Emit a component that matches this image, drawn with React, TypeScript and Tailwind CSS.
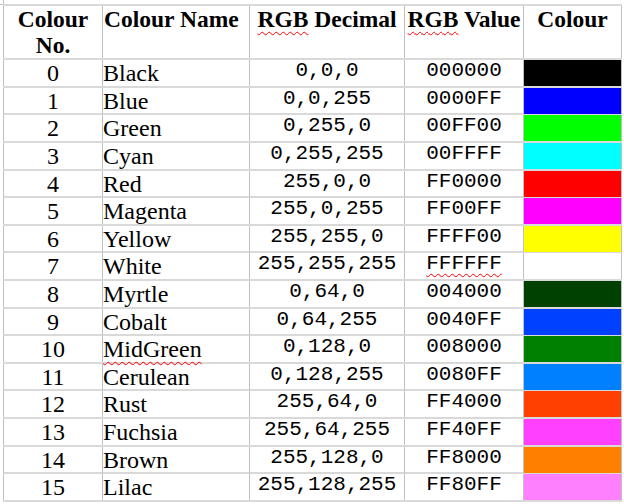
const colours = [
  { no: 0, name: "Black", dec: "0,0,0", hex: "000000", swatch: "bg-[#000000]" },
  { no: 1, name: "Blue", dec: "0,0,255", hex: "0000FF", swatch: "bg-[#0000ff]" },
  { no: 2, name: "Green", dec: "0,255,0", hex: "00FF00", swatch: "bg-[#00ff00]" },
  { no: 3, name: "Cyan", dec: "0,255,255", hex: "00FFFF", swatch: "bg-[#00ffff]" },
  { no: 4, name: "Red", dec: "255,0,0", hex: "FF0000", swatch: "bg-[#ff0000]" },
  { no: 5, name: "Magenta", dec: "255,0,255", hex: "FF00FF", swatch: "bg-[#ff00ff]" },
  { no: 6, name: "Yellow", dec: "255,255,0", hex: "FFFF00", swatch: "bg-[#ffff00]" },
  { no: 7, name: "White", dec: "255,255,255", hex: "FFFFFF", swatch: "bg-[#ffffff]" },
  { no: 8, name: "Myrtle", dec: "0,64,0", hex: "004000", swatch: "bg-[#004000]" },
  { no: 9, name: "Cobalt", dec: "0,64,255", hex: "0040FF", swatch: "bg-[#0040ff]" },
  { no: 10, name: "MidGreen", dec: "0,128,0", hex: "008000", swatch: "bg-[#008000]" },
  { no: 11, name: "Cerulean", dec: "0,128,255", hex: "0080FF", swatch: "bg-[#0080ff]" },
  { no: 12, name: "Rust", dec: "255,64,0", hex: "FF4000", swatch: "bg-[#ff4000]" },
  { no: 13, name: "Fuchsia", dec: "255,64,255", hex: "FF40FF", swatch: "bg-[#ff40ff]" },
  { no: 14, name: "Brown", dec: "255,128,0", hex: "FF8000", swatch: "bg-[#ff8000]" },
  { no: 15, name: "Lilac", dec: "255,128,255", hex: "FF80FF", swatch: "bg-[#ff80ff]" },
];

// words the spell checker flags
const flagged = ["MidGreen", "FFFFFF"];

const squiggle = "underline decoration-wavy decoration-[#ff0000] decoration-1 underline-offset-[4px]";

function Marked({ text }: { text: string }) {
  return flagged.includes(text) ? <span className={squiggle}>{text}</span> : <>{text}</>;
}

export default function App() {
  const cell = "border-l border-[#c0c0c0]";
  const serif = "font-['Liberation_Serif',serif] text-[24px] leading-[26px] text-black";
  const mono = "font-['Liberation_Mono',monospace] text-[21px] leading-[20px] text-black";

  return (
    <div className="relative w-[624px] h-[504px] bg-white pt-[4px] pl-[3px]">
      <div className="absolute left-0 top-[4px] w-[3px] h-px bg-[#c0c0c0]" />
      <div className="absolute left-[3px] top-0 w-px h-[4px] bg-[#c0c0c0]" />

      <div className="w-[619px] border-b-2 border-[#d9d9d9]">
        {/* header */}
        <div className="grid grid-cols-[99px_147px_155px_119px_99px] h-[54px] border-t-2 border-[#d9d9d9] font-bold font-['Liberation_Serif',serif] text-[23.5px] leading-[26px] text-black">
          <div className={`${cell} text-center`}>
            Colour
            <br />
            No.
          </div>
          <div className={`${cell} pl-px whitespace-nowrap`}>Colour Name</div>
          <div className={`${cell} text-center whitespace-nowrap`}>
            <span className={squiggle}>RGB</span> Decimal
          </div>
          <div className={`${cell} text-center whitespace-nowrap`}>
            <span className={squiggle}>RGB</span> Value
          </div>
          <div className={`${cell} border-r text-center`}>Colour</div>
        </div>

        {colours.map((c, i) => (
          <div
            key={c.no}
            className={`grid grid-cols-[99px_147px_155px_119px_99px] border-t-2 border-[#d9d9d9] ${
              i % 5 === 1 || i % 5 === 4 ? "h-[27px]" : "h-[28px]"
            }`}
          >
            <div className={`${cell} ${serif} text-center`}>{c.no}</div>
            <div className={`${cell} ${serif} whitespace-nowrap`}>
              <Marked text={c.name} />
            </div>
            <div className={`${cell} ${mono} text-center pt-px whitespace-nowrap`}>{c.dec}</div>
            <div className={`${cell} ${mono} text-center pt-px`}>
              <Marked text={c.hex} />
            </div>
            <div className={`${cell} border-r`}>
              <div className={`h-full ${c.swatch}`} />
            </div>
          </div>
        ))}
      </div>
    </div>
  );
}
